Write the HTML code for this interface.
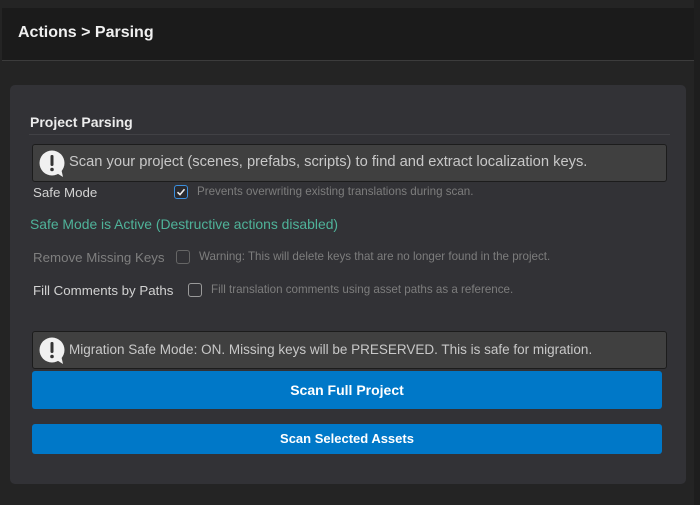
<!DOCTYPE html>
<html><head><meta charset="utf-8"><style>
*{margin:0;padding:0;box-sizing:border-box}
body{width:700px;height:505px;background:#242424;font-family:"Liberation Sans",sans-serif;position:relative;overflow:hidden}
.a{position:absolute;white-space:nowrap}
.hdr{left:2px;top:8px;width:692px;height:53px;background:#1b1b1b;border-bottom:1px solid #3c3c3c}
.panel{left:10px;top:85px;width:676px;height:399px;background:#323236;border-radius:5px}
.help{left:32px;width:635px;height:38px;background:#404040;border:1px solid #1c1c1c;border-radius:3px}
.help span{position:absolute;left:36px;top:10px;font-size:14px;color:#c8c8c8}
.ic{position:absolute;left:6px;top:5px}
.lbl{font-size:13.3px;color:#d2d2d2}
.desc{font-size:11.6px;color:#7d7d7d}
.cb{width:14px;height:14px;border:1px solid #9a9a9a;border-radius:3px}
.btn{left:32px;width:630px;background:#0078c8;border-radius:3px;color:#fff;font-weight:bold;text-align:center}
</style></head><body>
<div class="a" style="left:694px;top:0;width:6px;height:505px;background:#1e1e1e"></div>
<div class="a hdr"></div>
<div class="a" style="left:18px;top:24px;font-size:16px;font-weight:bold;color:#f0f0f0">Actions &gt; Parsing</div>
<div class="a panel"></div>
<div class="a" style="left:30px;top:114px;font-size:14px;font-weight:bold;color:#ececec">Project Parsing</div>
<div class="a" style="left:29px;top:134px;width:641px;height:1px;background:#414145"></div>

<div class="a help" style="top:144px">
<svg class="ic" width="26" height="28" viewBox="0 0 26 28"><circle cx="13" cy="13" r="12.5" fill="#f0f0f0"/><path d="M16 22 L24 27 L22 18 Z" fill="#f0f0f0"/><rect x="11.5" y="5" width="3" height="11" rx="1.2" fill="#333"/><circle cx="13" cy="19.5" r="1.8" fill="#333"/></svg>
<span style="font-size:14.7px;top:9px">Scan your project (scenes, prefabs, scripts) to find and extract localization keys.</span></div>

<div class="a lbl" style="left:33px;top:185px">Safe Mode</div>
<div class="a cb" style="left:174px;top:185px;border-color:#3a8fdf;background:#2a2a2e"><svg width="12" height="12" viewBox="0 0 12 12" style="position:absolute;left:0;top:0"><path d="M2.5 6.2 L5 8.6 L9.5 3.2" stroke="#eee" stroke-width="1.6" fill="none"/></svg></div>
<div class="a desc" style="left:197px;top:185px">Prevents overwriting existing translations during scan.</div>
<div class="a" style="left:30px;top:216px;font-size:13.9px;color:#4fb39a">Safe Mode is Active (Destructive actions disabled)</div>

<div class="a lbl" style="left:33px;top:250px;color:#7f7f7f">Remove Missing Keys</div>
<div class="a cb" style="left:176px;top:250px;border-color:#666"></div>
<div class="a desc" style="left:199px;top:250px">Warning: This will delete keys that are no longer found in the project.</div>

<div class="a lbl" style="left:33px;top:283px">Fill Comments by Paths</div>
<div class="a cb" style="left:188px;top:283px"></div>
<div class="a desc" style="left:211px;top:283px">Fill translation comments using asset paths as a reference.</div>

<div class="a help" style="top:331px">
<svg class="ic" width="26" height="28" viewBox="0 0 26 28"><circle cx="13" cy="13" r="12.5" fill="#f0f0f0"/><path d="M16 22 L24 27 L22 18 Z" fill="#f0f0f0"/><rect x="11.5" y="5" width="3" height="11" rx="1.2" fill="#333"/><circle cx="13" cy="19.5" r="1.8" fill="#333"/></svg>
<span style="font-size:13.5px">Migration Safe Mode: ON. Missing keys will be PRESERVED. This is safe for migration.</span></div>

<div class="a btn" style="top:371px;height:38px;line-height:38px;font-size:14px">Scan Full Project</div>
<div class="a btn" style="top:424px;height:30px;line-height:30px;font-size:13px">Scan Selected Assets</div>
</body></html>
